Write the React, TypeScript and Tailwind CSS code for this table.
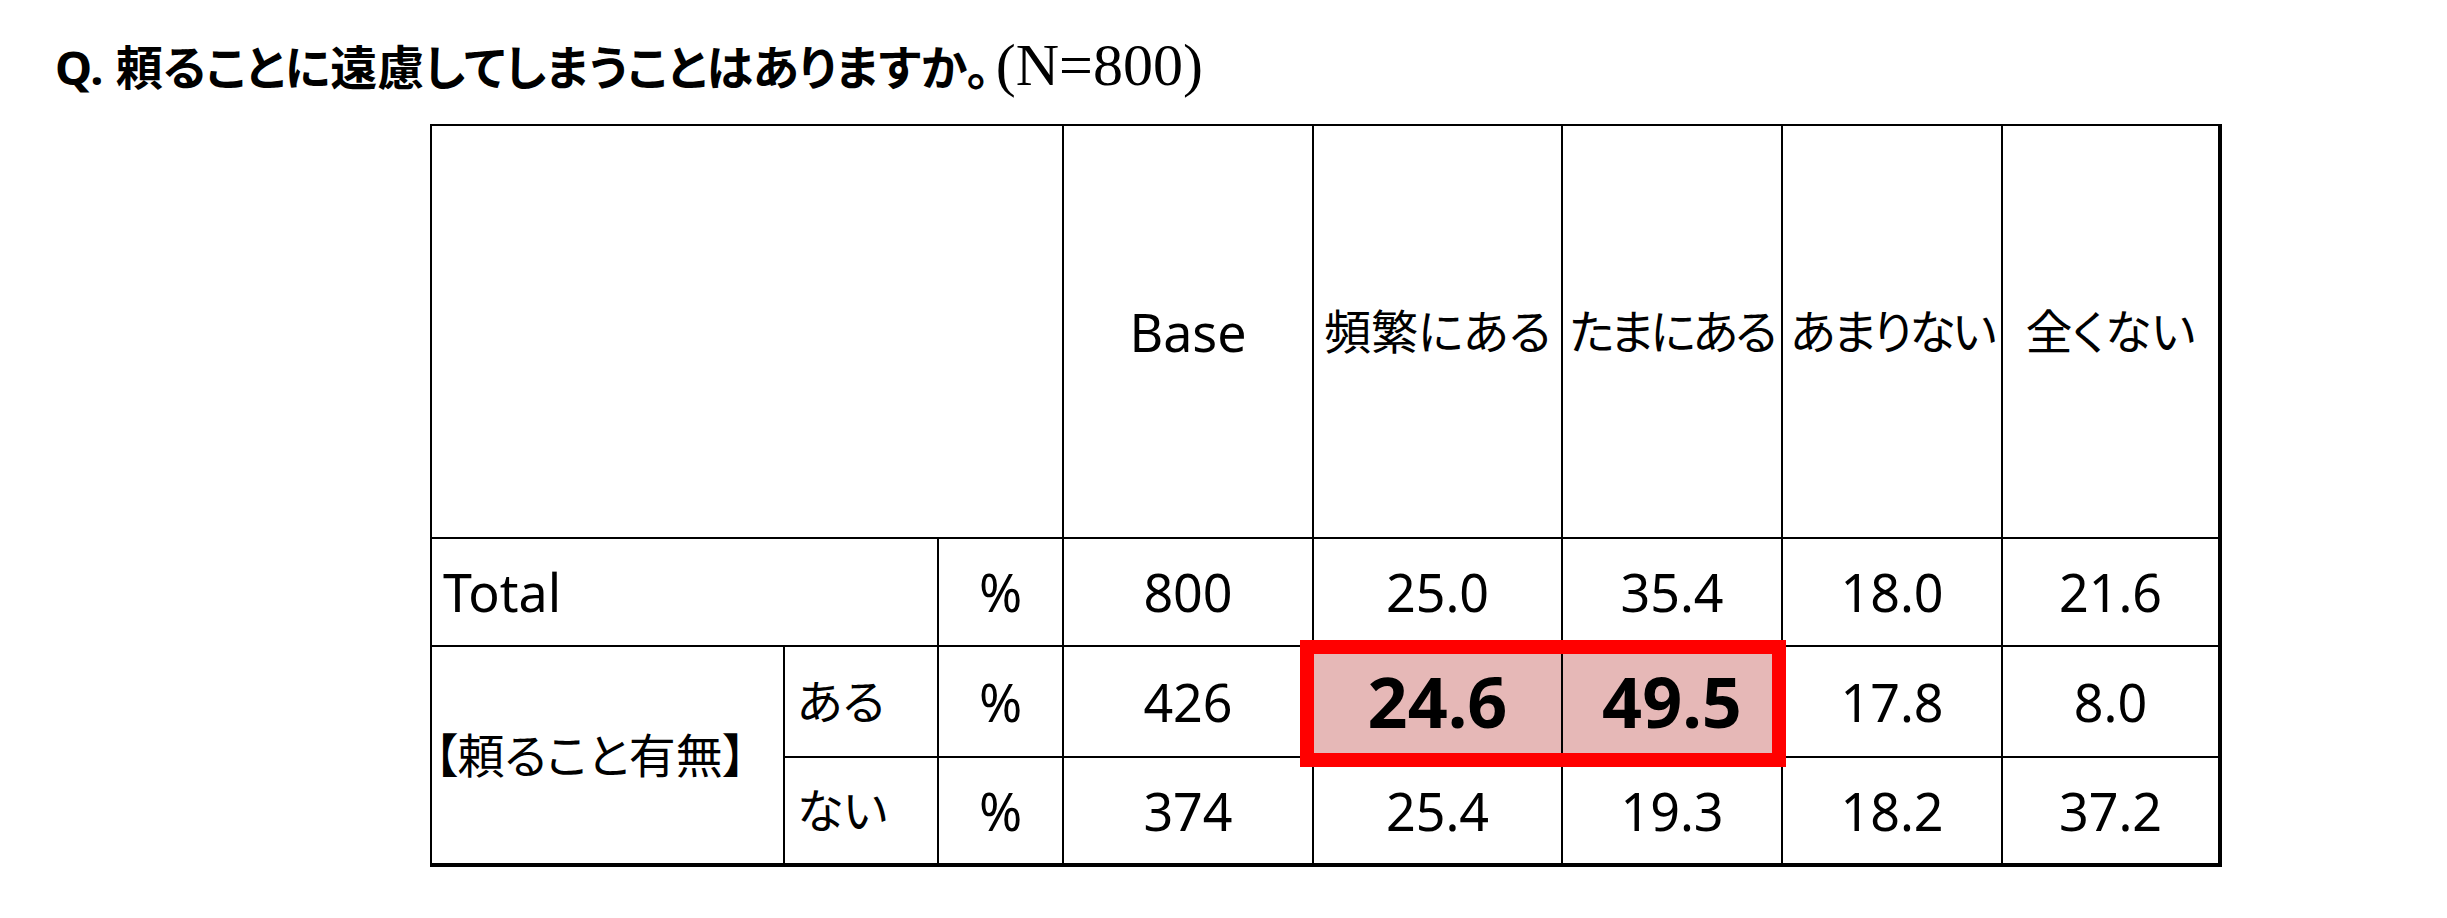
import React from 'react'

const jp = "font-['Noto_Sans','Noto_Sans_CJK_JP',sans-serif]"

const Cell = ({ children, className = '', bg = 'bg-white' }: { children?: React.ReactNode; className?: string; bg?: string }) => (
    <div className={`${bg} flex items-center justify-center whitespace-nowrap text-black text-[52px] ${jp} ${className}`}>{children}</div>
)

const J = ({ children, tight }: { children: React.ReactNode; tight?: boolean }) => (
    <span className={`text-[47px] [font-feature-settings:'palt'] ${tight ? 'tracking-[-3px]' : ''}`}>{children}</span>
)

const rows = [
    { label: 'ある', base: '426', v: ['24.6', '49.5', '17.8', '8.0'], hi: true },
    { label: 'ない', base: '374', v: ['25.4', '19.3', '18.2', '37.2'], hi: false },
]

const App = () => {
    return (
        <div className="w-[2447px] h-[918px] bg-white">
            <div className="h-[124px] pl-[55px] pt-[32px] flex items-baseline whitespace-nowrap text-black leading-[66px]">
                <span className={`${jp} font-bold text-[47px] [font-feature-settings:'palt']`}>Q. 頼ることに遠慮してしまうことはありますか。</span>
                <span className="font-['Liberation_Serif',serif] text-[60px] ml-[6px]">(N=800)</span>
            </div>

            <div className="ml-[430px] w-[1792px] relative">
                <div className="grid bg-black gap-[2px] pt-[2px] pl-[2px] pr-[4px] pb-[4px] grid-cols-[351px_152px_123px_248px_247px_218px_218px_215px] grid-rows-[411px_106px_109px_105px]">
                    {/* header */}
                    <Cell className="col-span-3" />
                    <Cell>Base</Cell>
                    <Cell><J>頻繁にある</J></Cell>
                    <Cell><J tight>たまにある</J></Cell>
                    <Cell><J tight>あまりない</J></Cell>
                    <Cell><J>全くない</J></Cell>

                    {/* total */}
                    <Cell className="col-span-2 justify-start pl-[11px]">Total</Cell>
                    <Cell>%</Cell>
                    <Cell>800</Cell>
                    <Cell>25.0</Cell>
                    <Cell>35.4</Cell>
                    <Cell>18.0</Cell>
                    <Cell>21.6</Cell>

                    <Cell className="row-span-2 justify-start pl-[2px]"><J>【頼ること有無】</J></Cell>
                    {rows.map((r) => (
                        <React.Fragment key={r.label}>
                            <Cell className="justify-start pl-[12px]"><J>{r.label}</J></Cell>
                            <Cell>%</Cell>
                            <Cell>{r.base}</Cell>
                            {r.v.map((x, i) =>
                                r.hi && i < 2 ? (
                                    <Cell key={i} bg="bg-[#e6b8b7]" className="font-bold text-[70px]">{x}</Cell>
                                ) : (
                                    <Cell key={i}>{x}</Cell>
                                )
                            )}
                        </React.Fragment>
                    ))}
                </div>
                <div className="absolute left-[870px] top-[516px] w-[486px] h-[127px] border-[14px] border-[#ff0000]" />
            </div>
        </div>
    )
}

export default App
